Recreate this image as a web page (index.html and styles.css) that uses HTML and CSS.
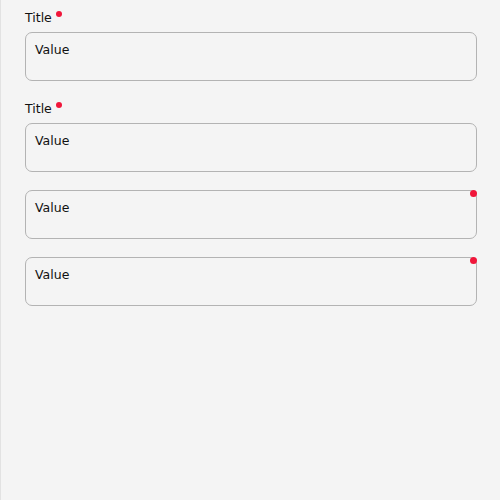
FILE: index.html
```html
<!DOCTYPE html>
<html>
<head>
<meta charset="utf-8">
<link rel="stylesheet" href="styles.css">
</head>
<body>
<div class="page">
  <div class="field">
    <div class="label">Title<span class="req"></span></div>
    <div class="input">Value</div>
  </div>
  <div class="field">
    <div class="label">Title<span class="req"></span></div>
    <div class="input">Value</div>
  </div>
  <div class="field">
    <div class="input">Value<span class="corner-req"></span></div>
  </div>
  <div class="field">
    <div class="input">Value<span class="corner-req"></span></div>
  </div>
</div>
</body>
</html>
```
FILE: styles.css
```css
html, body {
  margin: 0;
  padding: 0;
  background: #f4f4f4;
}
body {
  font-family: "DejaVu Sans", sans-serif;
  font-size: 12.5px;
  color: #111111;
}
.page {
  box-sizing: border-box;
  width: 500px;
  height: 500px;
  border-left: 1px solid #e2e2e2;
  padding: 8px 23px 0 24px;
  display: flex;
  flex-direction: column;
  gap: 18px;
}
.field {
  display: flex;
  flex-direction: column;
}
.label {
  line-height: 16px;
  height: 16px;
  padding-top: 2px;
  margin-bottom: 6px;
  display: flex;
  align-items: flex-start;
}
.req {
  width: 6px;
  height: 6px;
  border-radius: 50%;
  background: #f0163a;
  margin-left: 4px;
  margin-top: 1px;
}
.input {
  position: relative;
  box-sizing: border-box;
  height: 49px;
  border: 1px solid #b3b3b3;
  border-radius: 7px;
  padding: 9px 9px 8px;
  line-height: 16px;
}
.corner-req {
  position: absolute;
  top: -1px;
  right: -1px;
  width: 7px;
  height: 7px;
  border-radius: 50%;
  background: #f0163a;
}
```
